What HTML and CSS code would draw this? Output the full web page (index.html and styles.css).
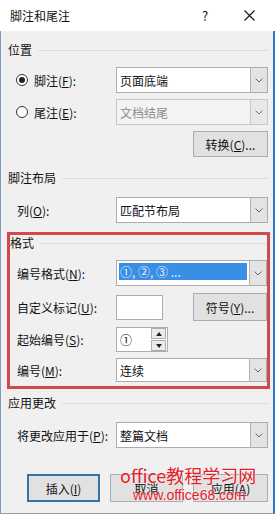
FILE: index.html
```html
<!DOCTYPE html>
<html lang="zh">
<head>
    <meta charset="UTF-8">
    <title>脚注和尾注</title>
    <link rel="stylesheet" href="styles.css">
</head>
<body>
<div class="dialog">
    <div class="titlebar">
        <span class="title">脚注和尾注</span>
        <span class="help">?</span>
        <span class="close">
            <svg width="11" height="11" viewBox="0 0 11 11"><path d="M0.5 0.5 L10.5 10.5 M10.5 0.5 L0.5 10.5" stroke="#111" stroke-width="1.1" fill="none"/></svg>
        </span>
    </div>

    <div class="content">
        <div class="group-head">位置</div>

        <div class="row first">
            <label class="radio-label"><span class="radio checked"></span>脚注(<u>F</u>):</label>
            <div class="combo"><span class="combo-text">页面底端</span><span class="arrow"><svg width="8" height="5" viewBox="0 0 8 5"><path d="M0.5 0.5 L4 4 L7.5 0.5" stroke="#666" fill="none"/></svg></span></div>
        </div>
        <div class="row">
            <label class="radio-label"><span class="radio"></span>尾注(<u>E</u>):</label>
            <div class="combo disabled"><span class="combo-text">文档结尾</span><span class="arrow"><svg width="8" height="5" viewBox="0 0 8 5"><path d="M0.5 0.5 L4 4 L7.5 0.5" stroke="#777" fill="none"/></svg></span></div>
        </div>
        <div class="row right">
            <button class="btn">转换(<u>C</u>)...</button>
        </div>

        <div class="group-head second">脚注布局</div>
        <div class="row layout-row">
            <label class="label">列(<u>O</u>):</label>
            <div class="combo"><span class="combo-text">匹配节布局</span><span class="arrow"><svg width="8" height="5" viewBox="0 0 8 5"><path d="M0.5 0.5 L4 4 L7.5 0.5" stroke="#666" fill="none"/></svg></span></div>
        </div>

        <div class="format-box">
            <div class="group-head">格式</div>
            <div class="row first">
                <label class="label">编号格式(<u>N</u>):</label>
                <div class="combo"><span class="combo-text selected">①, ②, ③ ...</span><span class="arrow"><svg width="8" height="5" viewBox="0 0 8 5"><path d="M0.5 0.5 L4 4 L7.5 0.5" stroke="#666" fill="none"/></svg></span></div>
            </div>
            <div class="row mark-row">
                <label class="label">自定义标记(<u>U</u>):</label>
                <div class="textbox"></div>
                <button class="btn symbol">符号(<u>Y</u>)...</button>
            </div>
            <div class="row spin-row">
                <label class="label">起始编号(<u>S</u>):</label>
                <div class="spin">
                    <span class="spin-text">①</span>
                    <span class="spin-buttons">
                        <span class="spin-btn"><svg width="6" height="4" viewBox="0 0 6 4"><path d="M0 4 L3 0 L6 4 Z" fill="#222"/></svg></span>
                        <span class="spin-btn"><svg width="6" height="4" viewBox="0 0 6 4"><path d="M0 0 L3 4 L6 0 Z" fill="#222"/></svg></span>
                    </span>
                </div>
            </div>
            <div class="row numbering-row">
                <label class="label">编号(<u>M</u>):</label>
                <div class="combo"><span class="combo-text">连续</span><span class="arrow"><svg width="8" height="5" viewBox="0 0 8 5"><path d="M0.5 0.5 L4 4 L7.5 0.5" stroke="#666" fill="none"/></svg></span></div>
            </div>
        </div>

        <div class="group-head third">应用更改</div>
        <div class="row apply-row">
            <label class="label">将更改应用于(<u>P</u>):</label>
            <div class="combo"><span class="combo-text">整篇文档</span><span class="arrow"><svg width="8" height="5" viewBox="0 0 8 5"><path d="M0.5 0.5 L4 4 L7.5 0.5" stroke="#666" fill="none"/></svg></span></div>
        </div>

        <div class="buttons">
            <button class="btn default">插入(<u>I</u>)</button>
            <button class="btn">取消</button>
            <button class="btn">应用(<u>A</u>)</button>
        </div>
    </div>

    <div class="watermark">
        <div class="wm-title">office教程学习网</div>
        <div class="wm-url">www.office68.com</div>
    </div>
</div>
</body>
</html>
```

FILE: styles.css
```css
body {
    margin: 0;
    background: #f0f0f0;
    font-family: "Noto Sans CJK SC", "Noto Sans", sans-serif;
    font-size: 12px;
    color: #111;
}
.dialog {
    position: relative;
    width: 275px;
    height: 514px;
    overflow: hidden;
}
.titlebar {
    height: 31px;
    background: #fff;
    display: flex;
    align-items: center;
    padding-left: 10px;
}
.title {
    flex: 1;
}
.help {
    width: 10px;
    margin-right: 34px;
    font-size: 13px;
    text-align: center;
}
.close {
    display: flex;
    margin-right: 20px;
}
.content {
    box-sizing: border-box;
    height: 483px;
    border-left: 1px solid #7e9bbd;
    border-right: 2px solid #2b7bd0;
    border-bottom: 1px solid #9a9a9a;
    padding: 11px 5px 0 7px;
}
.group-head {
    display: flex;
    align-items: center;
    height: 16px;
    line-height: 16px;
}
.group-head::after {
    content: "";
    flex: 1;
    height: 1px;
    background: #dcdcdc;
    margin-left: 6px;
}
.group-head.second {
    margin-top: 13px;
}
.group-head.third {
    margin-top: 6px;
}
.row {
    display: flex;
    align-items: center;
    margin-top: 6px;
}
.row.first {
    margin-top: 9px;
}
.row.right {
    justify-content: flex-end;
}
.layout-row {
    margin-top: 11px;
}
.radio-label {
    flex: 1;
    display: flex;
    align-items: center;
}
.radio {
    box-sizing: border-box;
    width: 12px;
    height: 12px;
    border: 1px solid #333;
    border-radius: 50%;
    margin: 0 6px 0 8px;
    background: #fff;
    display: flex;
    align-items: center;
    justify-content: center;
}
.radio.checked::after {
    content: "";
    width: 6px;
    height: 6px;
    border-radius: 50%;
    background: #222;
}
.label {
    flex: 1;
    padding-left: 9px;
}
.combo {
    box-sizing: border-box;
    width: 152px;
    height: 26px;
    border: 1px solid #adadad;
    background: #fff;
    display: flex;
}
.combo-text {
    flex: 1;
    display: flex;
    align-items: center;
    padding-left: 3px;
}
.combo-text.selected {
    margin: 2px 2px 5px 2px;
    padding-left: 1px;
    background: #3a8ee6;
    color: #e8f2ff;
}
.arrow {
    width: 16px;
    background: #e3e3e3;
    border-left: 1px solid #b4b4b4;
    display: flex;
    align-items: center;
    justify-content: center;
}
.combo.disabled {
    background: #f3f3f3;
    border-color: #c8c8c8;
    color: #8d8d8d;
}
.combo.disabled .arrow {
    background: #e8e8e8;
    border-left-color: #c8c8c8;
}
.btn {
    box-sizing: border-box;
    width: 75px;
    height: 26px;
    border: 1px solid #adadad;
    background: #e1e1e1;
    font-family: inherit;
    font-size: 12px;
    color: #111;
    padding: 0;
}
.format-box {
    margin: 9px -2px 0 -1px;
    border: 3px solid #d5484a;
    padding: 0 0 4px 0;
}
.format-box .label {
    padding-left: 7px;
}
.format-box .combo {
    width: 151px;
}
.mark-row {
    margin-top: 7px;
    height: 28px;
}
.textbox {
    box-sizing: border-box;
    width: 47px;
    height: 25px;
    border: 1px solid #adadad;
    background: #fff;
    margin-right: 30px;
}
.btn.symbol {
    width: 74px;
    height: 28px;
}
.spin-row .label {
    flex: none;
    width: 99px;
}
.spin {
    box-sizing: border-box;
    width: 52px;
    height: 25px;
    border: 1px solid #adadad;
    background: #fff;
    display: flex;
    align-items: center;
}
.spin-text {
    flex: 1;
    padding-left: 3px;
}
.spin-buttons {
    display: flex;
    flex-direction: column;
    gap: 1px;
    margin-right: 1px;
}
.spin-btn {
    box-sizing: border-box;
    width: 15px;
    height: 11px;
    border: 1px solid #adadad;
    background: #ebebeb;
    display: flex;
    align-items: center;
    justify-content: center;
}
.numbering-row .combo {
    height: 24px;
}
.apply-row {
    margin-top: 11px;
}
.buttons {
    display: flex;
    justify-content: flex-end;
    gap: 10px;
    margin-top: 26px;
}
.buttons .btn {
    width: 73px;
    height: 28px;
}
.buttons .btn:last-child {
    width: 75px;
}
.btn.default {
    border: 2px solid #3376ab;
}
.watermark {
    position: absolute;
    left: 120px;
    top: 463px;
    color: #e5202a;
}
.wm-title {
    font-size: 18px;
    line-height: 24px;
    text-shadow: 0 0 2px #fff;
}
.wm-url {
    margin: 0 0 0 13px;
    font-family: "Liberation Sans", sans-serif;
    font-size: 14px;
    line-height: 16px;
    text-shadow: 0 0 2px #fff;
}
```
